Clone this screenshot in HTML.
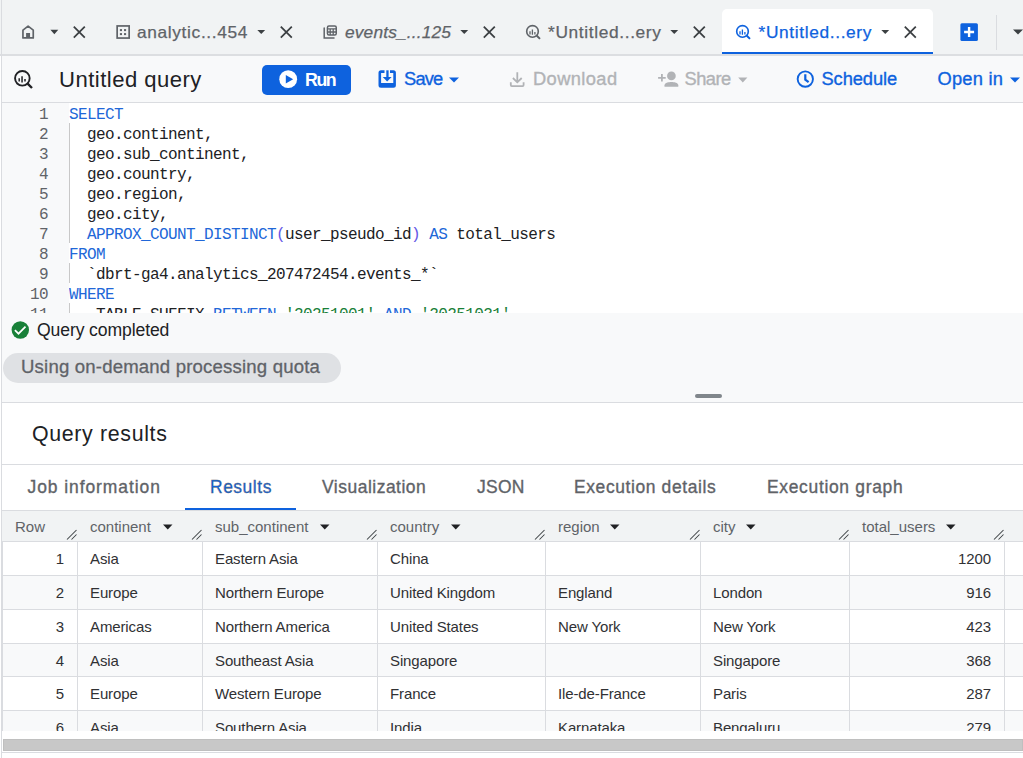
<!DOCTYPE html>
<html><head><meta charset="utf-8">
<style>
*{box-sizing:border-box;margin:0;padding:0}
html,body{width:1023px;height:758px;overflow:hidden;background:#fff;font-family:"Liberation Sans",sans-serif;color:#202124}
.a{position:absolute}
.t{position:absolute;white-space:nowrap;line-height:1}
svg{position:absolute;display:block}
/* tab bar */
#tabbar{left:0;top:0;width:1023px;height:56px;background:#f1f3f4;border-bottom:2px solid #dcdee1}
#leftline{left:1px;top:0;width:1px;height:758px;background:#dadce0}
.tabtxt{font-size:18px;color:#5f6368;-webkit-text-stroke:0.25px currentColor}
#toolbar{left:2px;top:56px;width:1021px;height:47px;background:#f8f9fa;border-bottom:1px solid #dadce0}
.btxt{font-size:17px;color:#0e62de;-webkit-text-stroke:0.35px currentColor}
.dis{color:#b1b3b6}
#gutter{left:2px;top:103px;width:67px;height:210px;background:#f8f9fa}
#code{left:69px;top:103px;width:954px;height:210px;background:#fff;overflow:hidden}
.ln{position:absolute;left:2px;width:46px;text-align:right;font-family:"Liberation Mono",monospace;font-size:16px;letter-spacing:-0.6px;color:#5f6368;line-height:20px}
.cl{position:absolute;left:0;font-family:"Liberation Mono",monospace;font-size:16px;letter-spacing:-0.6px;color:#202124;line-height:20px;white-space:pre}
.kw{color:#2167d8}
.pu{color:#6557e6}
.st{color:#188038}
.guide{position:absolute;left:0;width:1px;background:#c8c8c8}
#status{left:2px;top:313px;width:1021px;height:90px;background:#f8f9fa;border-bottom:1px solid #dadce0}
#results{left:2px;top:404px;width:1021px;height:354px;background:#fff}
.rtab{font-size:18px;color:#5f6368;-webkit-text-stroke:0.35px #5f6368}
.hdr{position:absolute;top:511px;height:31px;background:#f1f3f4;border-bottom:1px solid #dadce0}
.htxt{position:absolute;font-size:15px;color:#5f6368;white-space:nowrap;line-height:1}
.row{position:absolute;left:2px;width:1021px;height:34px;border-bottom:1px solid #dadce0}
.cell{position:absolute;font-size:15px;letter-spacing:-0.12px;color:#303134;white-space:nowrap;line-height:1}
.vl{position:absolute;width:1px;background:#dadce0}
</style></head><body>
<div id="tabbar" class="a"></div>
<!-- active tab -->
<div class="a" style="left:722px;top:9px;width:211px;height:45px;background:#fff;border-radius:5px 5px 0 0"></div>
<div class="a" style="left:722px;top:52px;width:211px;height:2px;background:#0e62de"></div>

<!-- home tab -->
<svg style="left:22px;top:25px" width="13" height="14" viewBox="0 0 13 14"><path d="M6.1 1.2L0.95 5.2V12.95H11.25V5.2z" fill="none" stroke="#5f6368" stroke-width="1.7" stroke-linejoin="round"/><rect x="4.1" y="8" width="3.95" height="5" fill="#5f6368"/></svg>
<svg style="left:48px;top:24px" width="12" height="14" viewBox="0 0 12 14"><path d="M2.4 5.8h7.9l-3.95 4.4z" fill="#3c4043"/></svg>
<svg style="left:72px;top:25px" width="14" height="14" viewBox="0 0 14 14"><path d="M1.8 1.6l11 11M12.8 1.6l-11 11" stroke="#3c4043" stroke-width="1.8"/></svg>

<!-- analytics tab -->
<svg style="left:116px;top:25px" width="14" height="14" viewBox="0 0 14 14"><rect x="1.15" y="0.95" width="12" height="12.1" fill="none" stroke="#5f6368" stroke-width="1.7"/><rect x="3.9" y="4.1" width="2.1" height="2" fill="#5f6368"/><rect x="8" y="4.1" width="2.1" height="2" fill="#5f6368"/><rect x="3.9" y="8.1" width="2.1" height="2" fill="#5f6368"/><rect x="8" y="8.1" width="2.1" height="2" fill="#5f6368"/></svg>
<div id="t1" class="t tabtxt" style="left:137.00px;top:23.54px;font-size:17.32px;letter-spacing:0.647px">analytic...454</div>
<svg style="left:256px;top:24px" width="12" height="14" viewBox="0 0 12 14"><path d="M1.3 6h7.9l-3.95 4.1z" fill="#3c4043"/></svg>
<svg style="left:279px;top:25px" width="14" height="14" viewBox="0 0 14 14"><path d="M1.8 1.6l11 11M12.8 1.6l-11 11" stroke="#3c4043" stroke-width="1.8"/></svg>

<!-- events tab -->
<svg style="left:322px;top:24px" width="16" height="16" viewBox="0 0 16 16"><path d="M2.2 4.1V14.1H12" fill="none" stroke="#5f6368" stroke-width="1.5" stroke-linecap="round"/><rect x="5.45" y="2.05" width="8.8" height="8.9" rx="1.5" fill="none" stroke="#5f6368" stroke-width="1.5"/><path d="M5.45 4.9h8.8M5.45 8h8.8M8.2 4.9v6M11.2 4.9v6" stroke="#5f6368" stroke-width="1.3"/></svg>
<div id="t2" class="t tabtxt" style="left:345.00px;top:23.54px;font-size:17.32px;letter-spacing:0.166px;font-style:italic">events_...125</div>
<svg style="left:459px;top:24px" width="12" height="14" viewBox="0 0 12 14"><path d="M1.3 6h7.9l-3.95 4.1z" fill="#3c4043"/></svg>
<svg style="left:482px;top:25px" width="14" height="14" viewBox="0 0 14 14"><path d="M1.8 1.6l11 11M12.8 1.6l-11 11" stroke="#3c4043" stroke-width="1.8"/></svg>

<!-- untitled tab 1 -->
<svg style="left:524px;top:24px" width="18" height="17" viewBox="0 0 18 17"><circle cx="8.5" cy="7.4" r="5.8" fill="none" stroke="#5f6368" stroke-width="1.6"/><path d="M12.6 11.5l3.4 3.4" stroke="#5f6368" stroke-width="2"/><path d="M6 7.3v3.1M8.4 5.5v5.3M10.9 8v2.4" stroke="#5f6368" stroke-width="1.3"/></svg>
<div id="t3" class="t tabtxt" style="left:548.00px;top:23.54px;font-size:17.32px;letter-spacing:0.643px">*Untitled...ery</div>
<svg style="left:669px;top:24px" width="12" height="14" viewBox="0 0 12 14"><path d="M1.3 6h7.9l-3.95 4.1z" fill="#3c4043"/></svg>
<svg style="left:692px;top:25px" width="14" height="14" viewBox="0 0 14 14"><path d="M1.8 1.6l11 11M12.8 1.6l-11 11" stroke="#3c4043" stroke-width="1.8"/></svg>

<!-- active tab content -->
<svg style="left:734px;top:24px" width="18" height="17" viewBox="0 0 18 17"><circle cx="8.5" cy="7.4" r="5.8" fill="none" stroke="#0e62de" stroke-width="1.6"/><path d="M12.6 11.5l3.4 3.4" stroke="#0e62de" stroke-width="2"/><path d="M6 7.3v3.1M8.4 5.5v5.3M10.9 8v2.4" stroke="#0e62de" stroke-width="1.3"/></svg>
<div id="t4" class="t tabtxt" style="left:758.50px;top:23.54px;font-size:17.32px;letter-spacing:0.643px;color:#0e62de">*Untitled...ery</div>
<svg style="left:880px;top:24px" width="12" height="14" viewBox="0 0 12 14"><path d="M1.3 6h7.9l-3.95 4.1z" fill="#3c4043"/></svg>
<svg style="left:903px;top:25px" width="14" height="14" viewBox="0 0 14 14"><path d="M1.8 1.6l11 11M12.8 1.6l-11 11" stroke="#3c4043" stroke-width="1.8"/></svg>

<!-- plus & divider -->
<svg style="left:960px;top:23px" width="18" height="18" viewBox="0 0 18 18"><rect x="0.4" y="0.2" width="17.5" height="17.7" rx="1.5" fill="#0e62de"/><path d="M9.1 4v10M4.1 9h10" stroke="#fff" stroke-width="2.4"/></svg>
<div class="a" style="left:996px;top:15px;width:1px;height:35px;background:#dadce0"></div>
<svg style="left:1011px;top:24px" width="14" height="14" viewBox="0 0 14 14"><path d="M2 5.5h10l-5 5z" fill="#3c4043"/></svg>

<!-- toolbar -->
<div id="toolbar" class="a"></div>
<svg style="left:13px;top:69px" width="21" height="21" viewBox="0 0 21 21"><circle cx="9.35" cy="9.35" r="7.3" fill="none" stroke="#202124" stroke-width="1.9"/><path d="M14.6 14.6l4.4 4.4" stroke="#202124" stroke-width="2.4"/><path d="M6.2 9.2v3.3M9.05 7.3v6.3M12 9.9v2.6" stroke="#202124" stroke-width="1.5"/></svg>
<div id="t5" class="t" style="left:59.00px;top:68.62px;font-size:22.07px;letter-spacing:0.478px;color:#202124">Untitled query</div>

<div class="a" style="left:262px;top:65px;width:89px;height:30px;background:#0e62de;border-radius:5px"></div>
<svg style="left:278px;top:69px" width="20" height="20" viewBox="0 0 20 20"><circle cx="10.2" cy="10.15" r="8.9" fill="#fff"/><path d="M7.8 5.9L15.15 10.15L7.8 14.4z" fill="#0e62de"/></svg>
<div id="t6" class="t" style="left:305.00px;top:71.69px;font-size:17.74px;letter-spacing:-1.400px;color:#fff;font-weight:bold">Run</div>

<svg style="left:378px;top:70px" width="18" height="18" viewBox="0 0 18 18"><path fill-rule="evenodd" d="M3 0.3H15.4A2.5 2.5 0 0 1 17.9 2.8V15.25A2.5 2.5 0 0 1 15.4 17.75H3A2.5 2.5 0 0 1 0.5 15.25V2.8A2.5 2.5 0 0 1 3 0.3zM3.1 3.1V13H15.3V3.1z" fill="#0e62de"/><rect x="6.5" y="0" width="5.5" height="3.2" fill="#f8f9fa"/><rect x="8.3" y="0.3" width="2.3" height="7" fill="#0e62de"/><path d="M4.7 6.9H13.6L9.15 11.6z" fill="#0e62de"/></svg>
<div id="t7" class="t btxt" style="left:404.00px;top:69.61px;font-size:18.30px;letter-spacing:-0.800px">Save</div>
<svg style="left:448px;top:73.5px" width="12" height="12" viewBox="0 0 12 12"><path d="M1 3.5h10l-5 5z" fill="#0e62de"/></svg>

<svg style="left:508px;top:71px" width="18" height="17" viewBox="0 0 18 17"><path d="M9.3 1.2v10M4.9 7L9.3 11.3l4.4-4.3M2.8 11.2v2.9a1 1 0 0 0 1 1h10.8a1 1 0 0 0 1-1v-2.9" fill="none" stroke="#b1b3b6" stroke-width="1.8"/></svg>
<div id="t8" class="t btxt dis" style="left:533.00px;top:69.61px;font-size:18.30px;letter-spacing:0.401px">Download</div>

<svg style="left:657px;top:70px" width="23" height="18" viewBox="0 0 23 18"><circle cx="14.4" cy="5.9" r="4.35" fill="#b1b3b6"/><path d="M7.5 16.8v-1.6c0-2.6 4.2-3.3 6.9-3.3s6.9 0.7 6.9 3.3v1.6z" fill="#b1b3b6"/><path d="M4.9 4.1v7.5M1.1 7.85h7.6" stroke="#b1b3b6" stroke-width="1.8"/></svg>
<div id="t9" class="t btxt dis" style="left:684.50px;top:69.61px;font-size:18.30px;letter-spacing:-0.500px">Share</div>
<svg style="left:737px;top:73.5px" width="12" height="12" viewBox="0 0 12 12"><path d="M1.2 3.6h9.2l-4.6 4.9z" fill="#b1b3b6"/></svg>

<svg style="left:795px;top:69px" width="21" height="21" viewBox="0 0 21 21"><circle cx="10.3" cy="10.05" r="7.65" fill="none" stroke="#0e62de" stroke-width="1.9"/><path d="M10.3 5.3V10.6L13.6 13.2" fill="none" stroke="#0e62de" stroke-width="2.2"/></svg>
<div id="t10" class="t btxt" style="left:821.50px;top:69.61px;font-size:18.30px;letter-spacing:-0.085px">Schedule</div>
<div id="t11" class="t btxt" style="left:937.50px;top:69.61px;font-size:18.30px;letter-spacing:0.234px">Open in</div>
<svg style="left:1008.5px;top:73.5px" width="12" height="12" viewBox="0 0 12 12"><path d="M1 3.5h10l-5 5z" fill="#0e62de"/></svg>

<!-- editor -->
<div id="gutter" class="a"></div>
<div id="code" class="a">
<div class="cl" style="top:2px"><span class="kw">SELECT</span></div>
<div class="cl" style="top:22px">  geo.continent,</div>
<div class="cl" style="top:42px">  geo.sub_continent,</div>
<div class="cl" style="top:62px">  geo.country,</div>
<div class="cl" style="top:82px">  geo.region,</div>
<div class="cl" style="top:102px">  geo.city,</div>
<div class="cl" style="top:122px">  <span class="kw">APPROX_COUNT_DISTINCT</span><span class="pu">(</span>user_pseudo_id<span class="pu">)</span> <span class="kw">AS</span> total_users</div>
<div class="cl" style="top:142px"><span class="kw">FROM</span></div>
<div class="cl" style="top:162px">  `dbrt-ga4.analytics_207472454.events_*`</div>
<div class="cl" style="top:182px"><span class="kw">WHERE</span></div>
<div class="cl" style="top:202px">  _TABLE_SUFFIX <span class="kw">BETWEEN</span> <span class="st">'20251001'</span> <span class="kw">AND</span> <span class="st">'20251031'</span></div>
<div class="guide" style="top:20px;height:120px"></div>
<div class="guide" style="top:160px;height:20px"></div>
<div class="guide" style="top:200px;height:20px"></div>
</div>
<div id="lines">
<div class="ln" style="top:105px">1</div>
<div class="ln" style="top:125px">2</div>
<div class="ln" style="top:145px">3</div>
<div class="ln" style="top:165px">4</div>
<div class="ln" style="top:185px">5</div>
<div class="ln" style="top:205px">6</div>
<div class="ln" style="top:225px">7</div>
<div class="ln" style="top:245px">8</div>
<div class="ln" style="top:265px">9</div>
<div class="ln" style="top:285px">10</div>
<div class="ln" style="top:305px">11</div>
</div>

<!-- status -->
<div id="status" class="a"></div>
<svg style="left:11px;top:321px" width="19" height="19" viewBox="0 0 19 19"><circle cx="9.3" cy="9.0" r="8.7" fill="#188038"/><path d="M3.9 9.2L7.5 12.7L14.5 5.7" fill="none" stroke="#fff" stroke-width="1.7"/></svg>
<div id="t12" class="t" style="left:37.00px;top:322.30px;font-size:17.60px;letter-spacing:-0.114px;color:#202124">Query completed</div>
<div class="a" style="left:3px;top:353px;width:338px;height:30px;background:#dfe1e4;border-radius:15px"></div>
<div id="t13" class="t" style="left:21.00px;top:358.08px;font-size:18.58px;letter-spacing:0.181px;color:#5f6368;-webkit-text-stroke:0.3px #5f6368">Using on-demand processing quota</div>
<div class="a" style="left:695px;top:394px;width:27px;height:4px;background:#80868b;border-radius:2px"></div>

<!-- results -->
<div id="results" class="a"></div>
<div id="t14" class="t" style="left:32.00px;top:423.61px;font-size:21.37px;letter-spacing:0.651px;color:#202124">Query results</div>
<div class="a" style="left:2px;top:464px;width:1021px;height:1px;background:#dadce0"></div>
<div id="t15" class="t rtab" style="left:27.50px;top:478.92px;font-size:17.46px;letter-spacing:0.943px">Job information</div>
<div id="t16" class="t rtab" style="left:210.00px;top:478.92px;font-size:17.46px;letter-spacing:0.534px;color:#0e62de">Results</div>
<div class="a" style="left:2px;top:510px;width:1021px;height:1px;background:#dadce0"></div>
<div class="a" style="left:185px;top:508px;width:111px;height:2px;background:#0e62de"></div>
<div id="t17" class="t rtab" style="left:322.00px;top:478.92px;font-size:17.46px;letter-spacing:0.516px">Visualization</div>
<div id="t18" class="t rtab" style="left:477.00px;top:478.92px;font-size:17.46px;letter-spacing:0.267px">JSON</div>
<div id="t19" class="t rtab" style="left:574.00px;top:478.92px;font-size:17.46px;letter-spacing:0.614px">Execution details</div>
<div id="t20" class="t rtab" style="left:767.00px;top:478.92px;font-size:17.46px;letter-spacing:0.686px">Execution graph</div>

<div class="hdr" style="left:2px;width:1021px"></div>
<div id="table">
<div class="htxt" style="left:15px;top:519px">Row</div>
<svg style="left:66px;top:529px" width="11" height="11" viewBox="0 0 11 11"><path d="M1 10.5L10.5 1M5.5 10.5L10.5 5.5" stroke="#3c4043" stroke-width="1.05"/></svg>
<div class="htxt" style="left:90px;top:519px">continent</div>
<svg style="left:191px;top:529px" width="11" height="11" viewBox="0 0 11 11"><path d="M1 10.5L10.5 1M5.5 10.5L10.5 5.5" stroke="#3c4043" stroke-width="1.05"/></svg>
<div class="htxt" style="left:215px;top:519px">sub_continent</div>
<svg style="left:366px;top:529px" width="11" height="11" viewBox="0 0 11 11"><path d="M1 10.5L10.5 1M5.5 10.5L10.5 5.5" stroke="#3c4043" stroke-width="1.05"/></svg>
<div class="htxt" style="left:390px;top:519px">country</div>
<svg style="left:534px;top:529px" width="11" height="11" viewBox="0 0 11 11"><path d="M1 10.5L10.5 1M5.5 10.5L10.5 5.5" stroke="#3c4043" stroke-width="1.05"/></svg>
<div class="htxt" style="left:558px;top:519px">region</div>
<svg style="left:689px;top:529px" width="11" height="11" viewBox="0 0 11 11"><path d="M1 10.5L10.5 1M5.5 10.5L10.5 5.5" stroke="#3c4043" stroke-width="1.05"/></svg>
<div class="htxt" style="left:713px;top:519px">city</div>
<svg style="left:838px;top:529px" width="11" height="11" viewBox="0 0 11 11"><path d="M1 10.5L10.5 1M5.5 10.5L10.5 5.5" stroke="#3c4043" stroke-width="1.05"/></svg>
<div class="htxt" style="left:862px;top:519px">total_users</div>
<svg style="left:993px;top:529px" width="11" height="11" viewBox="0 0 11 11"><path d="M1 10.5L10.5 1M5.5 10.5L10.5 5.5" stroke="#3c4043" stroke-width="1.05"/></svg>
<svg style="left:163px;top:523.5px" width="10" height="6" viewBox="0 0 10 6"><path d="M0 0.5h9.5l-4.75 5z" fill="#202124"/></svg>
<svg style="left:319.5px;top:523.5px" width="10" height="6" viewBox="0 0 10 6"><path d="M0 0.5h9.5l-4.75 5z" fill="#202124"/></svg>
<svg style="left:450.5px;top:523.5px" width="10" height="6" viewBox="0 0 10 6"><path d="M0 0.5h9.5l-4.75 5z" fill="#202124"/></svg>
<svg style="left:610px;top:523.5px" width="10" height="6" viewBox="0 0 10 6"><path d="M0 0.5h9.5l-4.75 5z" fill="#202124"/></svg>
<svg style="left:746px;top:523.5px" width="10" height="6" viewBox="0 0 10 6"><path d="M0 0.5h9.5l-4.75 5z" fill="#202124"/></svg>
<svg style="left:946px;top:523.5px" width="10" height="6" viewBox="0 0 10 6"><path d="M0 0.5h9.5l-4.75 5z" fill="#202124"/></svg>
<div class="a" style="left:2px;top:542px;width:1021px;height:189px;overflow:hidden">
<div class="row" style="left:0;top:0px;height:34px;background:#fff"></div>
<div class="cell" style="left:0px;width:62px;text-align:right;top:9px">1</div>
<div class="cell" style="left:88px;top:9px">Asia</div>
<div class="cell" style="left:213px;top:9px">Eastern Asia</div>
<div class="cell" style="left:388px;top:9px">China</div>
<div class="cell" style="left:847px;width:142px;text-align:right;top:9px">1200</div>
<div class="row" style="left:0;top:34px;height:34px;background:#f8f9fa"></div>
<div class="cell" style="left:0px;width:62px;text-align:right;top:43px">2</div>
<div class="cell" style="left:88px;top:43px">Europe</div>
<div class="cell" style="left:213px;top:43px">Northern Europe</div>
<div class="cell" style="left:388px;top:43px">United Kingdom</div>
<div class="cell" style="left:556px;top:43px">England</div>
<div class="cell" style="left:711px;top:43px">London</div>
<div class="cell" style="left:847px;width:142px;text-align:right;top:43px">916</div>
<div class="row" style="left:0;top:68px;height:34px;background:#fff"></div>
<div class="cell" style="left:0px;width:62px;text-align:right;top:77px">3</div>
<div class="cell" style="left:88px;top:77px">Americas</div>
<div class="cell" style="left:213px;top:77px">Northern America</div>
<div class="cell" style="left:388px;top:77px">United States</div>
<div class="cell" style="left:556px;top:77px">New York</div>
<div class="cell" style="left:711px;top:77px">New York</div>
<div class="cell" style="left:847px;width:142px;text-align:right;top:77px">423</div>
<div class="row" style="left:0;top:102px;height:33px;background:#f8f9fa"></div>
<div class="cell" style="left:0px;width:62px;text-align:right;top:111px">4</div>
<div class="cell" style="left:88px;top:111px">Asia</div>
<div class="cell" style="left:213px;top:111px">Southeast Asia</div>
<div class="cell" style="left:388px;top:111px">Singapore</div>
<div class="cell" style="left:711px;top:111px">Singapore</div>
<div class="cell" style="left:847px;width:142px;text-align:right;top:111px">368</div>
<div class="row" style="left:0;top:135px;height:34px;background:#fff"></div>
<div class="cell" style="left:0px;width:62px;text-align:right;top:144px">5</div>
<div class="cell" style="left:88px;top:144px">Europe</div>
<div class="cell" style="left:213px;top:144px">Western Europe</div>
<div class="cell" style="left:388px;top:144px">France</div>
<div class="cell" style="left:556px;top:144px">Ile-de-France</div>
<div class="cell" style="left:711px;top:144px">Paris</div>
<div class="cell" style="left:847px;width:142px;text-align:right;top:144px">287</div>
<div class="row" style="left:0;top:169px;height:34px;background:#f8f9fa"></div>
<div class="cell" style="left:0px;width:62px;text-align:right;top:178px">6</div>
<div class="cell" style="left:88px;top:178px">Asia</div>
<div class="cell" style="left:213px;top:178px">Southern Asia</div>
<div class="cell" style="left:388px;top:178px">India</div>
<div class="cell" style="left:556px;top:178px">Karnataka</div>
<div class="cell" style="left:711px;top:178px">Bengaluru</div>
<div class="cell" style="left:847px;width:142px;text-align:right;top:178px">279</div>
<div class="vl" style="left:75px;top:0;height:190px"></div>
<div class="vl" style="left:200px;top:0;height:190px"></div>
<div class="vl" style="left:375px;top:0;height:190px"></div>
<div class="vl" style="left:543px;top:0;height:190px"></div>
<div class="vl" style="left:698px;top:0;height:190px"></div>
<div class="vl" style="left:847px;top:0;height:190px"></div>
<div class="vl" style="left:1002px;top:0;height:190px"></div>
<div class="vl" style="left:0;top:0;height:190px"></div>
</div>
</div>

<!-- scrollbar -->
<div class="a" style="left:2px;top:731px;width:1021px;height:27px;background:#fff"></div>
<div class="a" style="left:3px;top:739px;width:1020px;height:12px;background:#c8c8c8;border:1px solid #bfbfbf"></div>
<div class="a" style="left:2px;top:752px;width:1021px;height:1px;background:#dadce0"></div>

<div id="leftline" class="a"></div>
</body></html>
